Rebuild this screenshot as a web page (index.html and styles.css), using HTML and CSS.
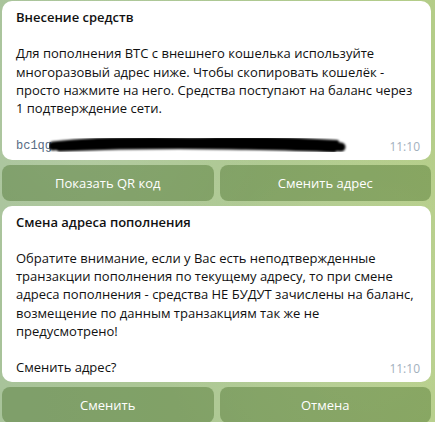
FILE: index.html
```html
<!DOCTYPE html>
<html>
<head>
  <meta charset="utf-8">
  <title>Пополнение BTC</title>
  <link rel="stylesheet" href="styles.css">
</head>
<body>
  <div class="chat">

    <div class="bubble">
      <div class="text">
        <b>Внесение средств</b><br>
        <br>
        Для пополнения BTC с внешнего кошелька используйте<br>
        многоразовый адрес ниже. Чтобы скопировать кошелёк -<br>
        просто нажмите на него. Средства поступают на баланс через<br>
        1 подтверждение сети.<br>
        <br>
        <span class="address">bc1qg<svg class="redact" width="300" height="14" viewBox="0 3 300 14" preserveAspectRatio="none">
          <defs>
            <filter id="soft" x="-5%" y="-50%" width="110%" height="200%">
              <feGaussianBlur stdDeviation="0.9"/>
            </filter>
          </defs>
          <g filter="url(#soft)" stroke="#000" fill="none" stroke-linecap="round">
            <path d="M4 11 C40 7, 90 6, 140 7 S230 8, 292 12" stroke-width="9"/>
            <path d="M10 14 C60 12, 120 11, 180 12 S250 13, 285 15" stroke-width="5"/>
            <path d="M140 5 C180 3, 230 3, 288 7" stroke-width="4"/>
          </g>
        </svg></span>
      </div>
      <span class="time">11:10</span>
    </div>

    <div class="keyboard">
      <button class="key">Показать QR код</button>
      <button class="key">Сменить адрес</button>
    </div>

    <div class="bubble">
      <div class="text">
        <b>Смена адреса пополнения</b><br>
        <br>
        Обратите внимание, если у Вас есть неподтвержденные<br>
        транзакции пополнения по текущему адресу, то при смене<br>
        адреса пополнения - средства НЕ БУДУТ зачислены на баланс,<br>
        возмещение по данным транзакциям так же не<br>
        предусмотрено!<br>
        <br>
        Сменить адрес?
      </div>
      <span class="time">11:10</span>
    </div>

    <div class="keyboard">
      <button class="key">Сменить</button>
      <button class="key">Отмена</button>
    </div>

  </div>
</body>
</html>
```

FILE: styles.css
```css
html, body {
  margin: 0;
  height: 100%;
  overflow: hidden;
}

body {
  font-family: "Open Sans", "DejaVu Sans", sans-serif;
  font-size: 13px;
  color: #111;
  background:
    radial-gradient(circle at 20% 30%, rgba(255,255,255,0.10), transparent 40%),
    radial-gradient(circle at 85% 75%, rgba(255,255,230,0.12), transparent 45%),
    linear-gradient(90deg, #a8c39a 0%, #adc893 50%, #b4cd88 100%);
}

.chat {
  display: flex;
  flex-direction: column;
  gap: 5px;
  padding: 1px 4px 0 2px;
}

/* message bubble */
.bubble {
  position: relative;
  background: #fff;
  border-radius: 10px;
  padding: 7px 14px 6px 14px;
}

.text {
  line-height: 18.2px;
  white-space: nowrap;
}

.text b {
  font-weight: 600;
}

.address {
  font-family: "Liberation Mono", "DejaVu Sans Mono", monospace;
  font-size: 12px;
  line-height: 1;
  color: #576c84;
}

.redact {
  vertical-align: -3px;
  margin-left: -3px;
}

.time {
  position: absolute;
  right: 11px;
  bottom: 5px;
  font-size: 12px;
  line-height: 16px;
  color: #a2b0bd;
}

/* inline keyboard under a message */
.keyboard {
  display: grid;
  grid-template-columns: 1fr 1fr;
  gap: 6px;
}

.key {
  height: 36px;
  border: 0;
  border-radius: 8px;
  background: rgba(64, 104, 36, 0.4);
  color: #fff;
  font-family: "Open Sans", "DejaVu Sans", sans-serif;
  font-size: 13px;
  font-weight: 500;
}
```
